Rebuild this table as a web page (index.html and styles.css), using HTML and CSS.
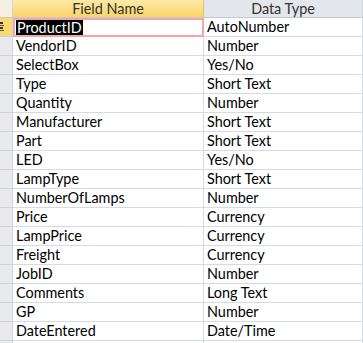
FILE: index.html
```html
<!DOCTYPE html>
<html lang="en">
<head>
    <meta charset="UTF-8">
    <title>Table Design</title>
    <link rel="stylesheet" href="styles.css">
</head>
<body>
    <div class="design-grid">
        <div class="hdr corner"></div>
        <div class="hdr hdr-active">Field Name</div>
        <div class="hdr">Data Type</div>

        <div class="sel sel-current">
            <svg class="key" width="6" height="12" viewBox="0 0 6 12">
                <rect x="0" y="1" width="3" height="2" fill="#333"/>
                <rect x="0" y="4" width="4" height="1" fill="#555"/>
                <rect x="0" y="6" width="3" height="2" fill="#333"/>
                <rect x="0" y="9" width="4" height="1" fill="#555"/>
            </svg>
        </div>
        <div class="cell cell-focus"><span class="picked">ProductID</span></div>
        <div class="cell">AutoNumber</div>

        <div class="sel"></div><div class="cell">VendorID</div><div class="cell">Number</div>
        <div class="sel"></div><div class="cell">SelectBox</div><div class="cell">Yes/No</div>
        <div class="sel"></div><div class="cell">Type</div><div class="cell">Short Text</div>
        <div class="sel"></div><div class="cell">Quantity</div><div class="cell">Number</div>
        <div class="sel"></div><div class="cell">Manufacturer</div><div class="cell">Short Text</div>
        <div class="sel"></div><div class="cell">Part</div><div class="cell">Short Text</div>
        <div class="sel"></div><div class="cell">LED</div><div class="cell">Yes/No</div>
        <div class="sel"></div><div class="cell">LampType</div><div class="cell">Short Text</div>
        <div class="sel"></div><div class="cell">NumberOfLamps</div><div class="cell">Number</div>
        <div class="sel"></div><div class="cell">Price</div><div class="cell">Currency</div>
        <div class="sel"></div><div class="cell">LampPrice</div><div class="cell">Currency</div>
        <div class="sel"></div><div class="cell">Freight</div><div class="cell">Currency</div>
        <div class="sel"></div><div class="cell">JobID</div><div class="cell">Number</div>
        <div class="sel"></div><div class="cell">Comments</div><div class="cell">Long Text</div>
        <div class="sel"></div><div class="cell">GP</div><div class="cell">Number</div>
        <div class="sel"></div><div class="cell">DateEntered</div><div class="cell">Date/Time</div>
        <div class="sel"></div><div class="cell"></div><div class="cell"></div>
    </div>
</body>
</html>
```

FILE: styles.css
```css
body {
    margin: 0;
    background: #fff;
    font-family: Lato, "Open Sans", sans-serif;
    font-size: 14.4px;
    color: #000;
}
.design-grid {
    display: grid;
    grid-template-columns: 13px 191px 159px;
    grid-template-rows: 18px;
    grid-auto-rows: 19px;
    overflow: hidden;
}
.hdr {
    box-sizing: border-box;
    background: #e3e6eb;
    border-right: 1px solid #cfd4dc;
    border-bottom: 1px solid #c3cad6;
    color: #333;
    text-align: center;
    line-height: 17px;
}
.corner {
    background: #f4f0e4;
}
.hdr-active {
    background: linear-gradient(#fde8a8, #fbd666);
    border-right-color: #e7c25a;
}
.sel {
    box-sizing: border-box;
    background: #e7e9ed;
    border-right: 1px solid #cdd3dc;
    border-bottom: 1px solid #cdd3dc;
    position: relative;
}
.sel-current {
    background: #fcd970;
}
.key {
    position: absolute;
    left: 0;
    top: 3px;
}
.cell {
    box-sizing: border-box;
    border-right: 1px solid #d5dbe5;
    border-bottom: 1px solid #d5dbe5;
    padding-left: 3px;
    line-height: 18px;
    white-space: nowrap;
}
.cell-focus {
    border: 2px solid #f4a5a8;
    padding-left: 1px;
    line-height: 15px;
}
.picked {
    display: inline-block;
    background: #000;
    color: #fff;
    padding: 0 1px;
}
```
